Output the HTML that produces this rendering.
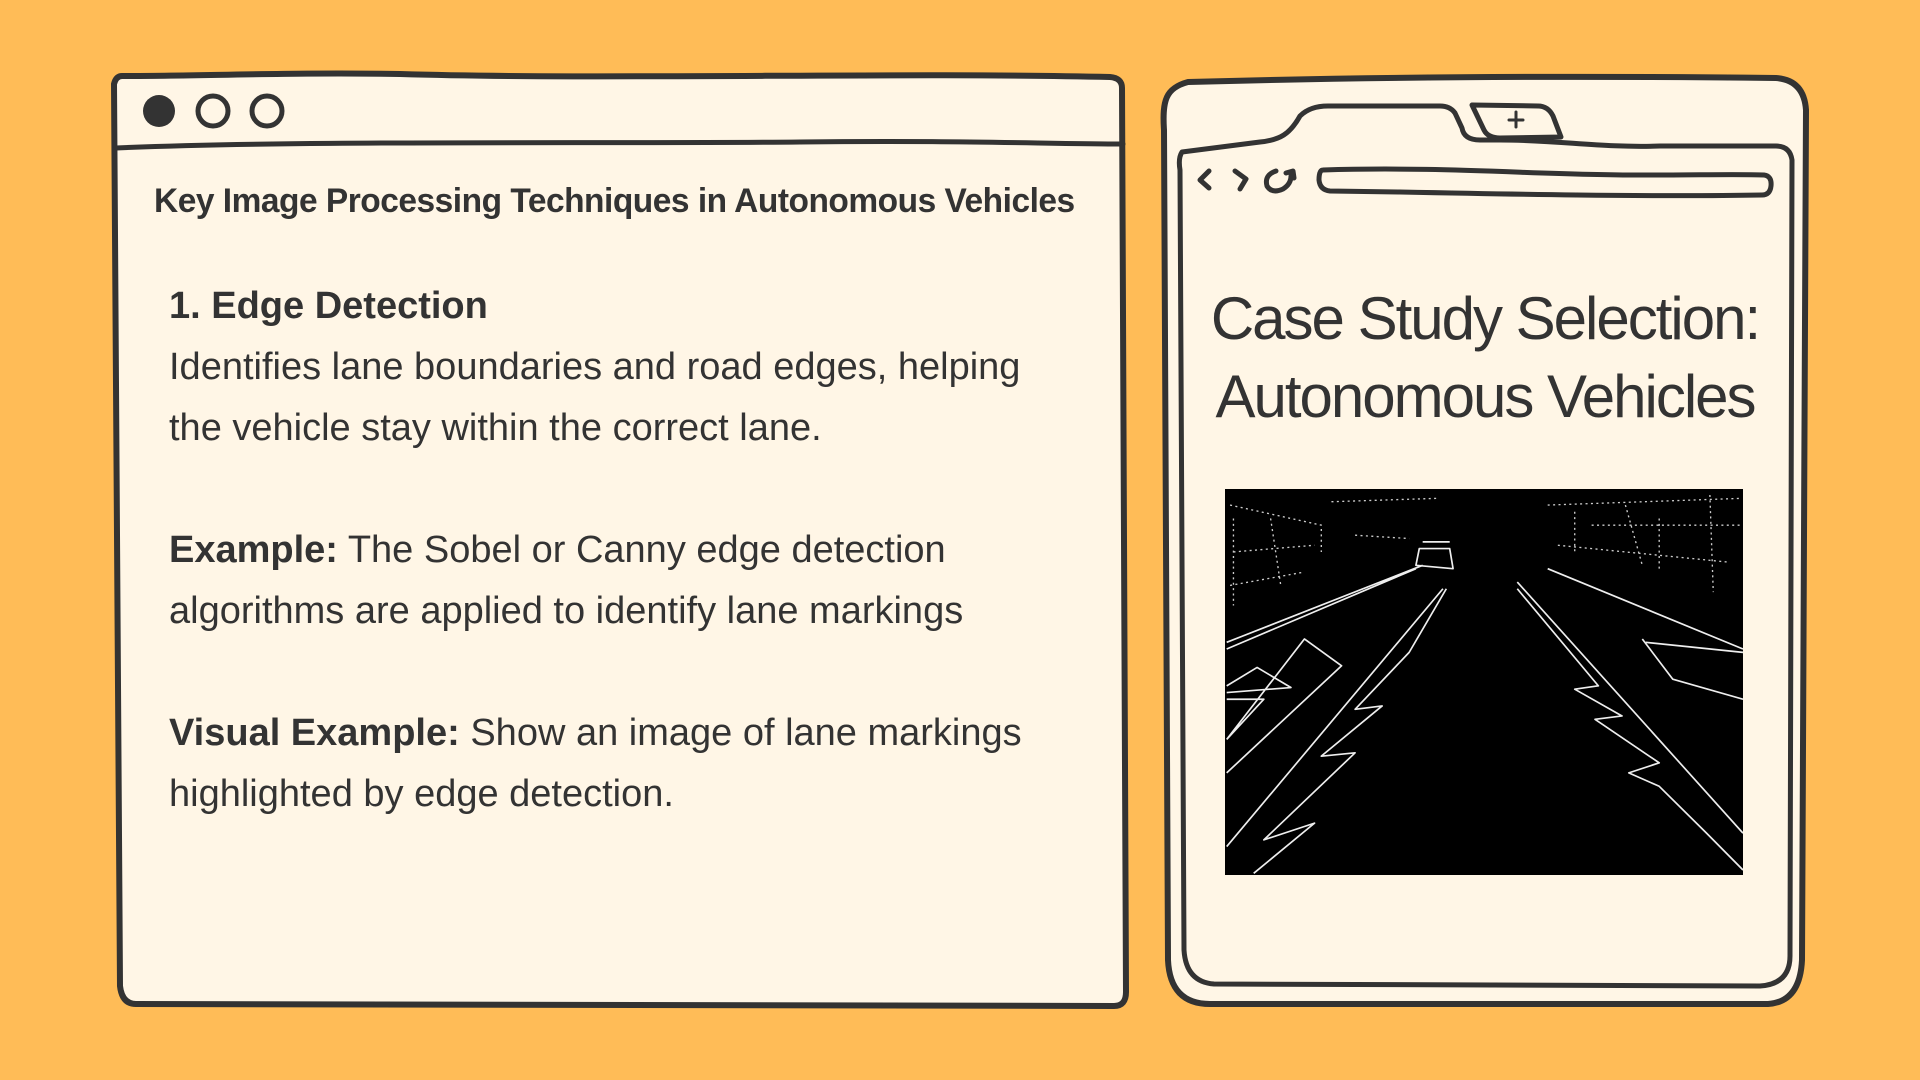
<!DOCTYPE html>
<html><head><meta charset="utf-8"><style>
html,body{margin:0;padding:0}
body{width:1920px;height:1080px;background:#FFBC57;position:relative;overflow:hidden;font-family:"Liberation Sans",sans-serif;color:#333}
svg.frame{position:absolute;left:0;top:0}
.t{position:absolute;white-space:nowrap}
</style></head><body>
<svg class="frame" width="1920" height="1080" viewBox="0 0 1920 1080">
 <g fill="#FFF6E6" stroke="#333" stroke-width="6" stroke-linejoin="round" stroke-linecap="round">
  <path d="M122,76 Q116,76 114,84 L120,986 Q122,1004 136,1004 L1114,1006 Q1126,1006 1126,992 L1122,88 Q1122,78 1110,77 C900,72 600,80 400,74 C300,72 200,76 122,76 Z"/>
  <path d="M1188,82 C1166,88 1162,100 1164,130 L1168,960 Q1170,1004 1210,1004 L1768,1004 Q1800,1002 1802,960 L1806,110 Q1804,80 1776,78 C1600,76 1400,76 1188,82 Z"/>
 </g>
 <g fill="none" stroke="#333" stroke-width="5" stroke-linecap="round" stroke-linejoin="round">
  <path d="M116,148 C300,140 600,144 800,142 C950,140 1050,144 1123,144"/>
  <path d="M1182,152 Q1178,158 1180,170 L1184,950 Q1186,982 1214,984 L1760,986 Q1790,984 1790,956 L1792,160 Q1790,146 1776,146 L1660,146 C1600,148 1560,140 1500,140 L1480,140 Q1464,140 1462,128 L1455,113 Q1450,106 1440,106 L1328,106 Q1310,106 1300,116 C1290,134 1280,140 1260,142 Z"/>
  <path d="M1472,105 L1484,130 Q1488,138 1500,138 L1561,137 L1553,116 Q1548,106 1538,106 Z"/>
  <path d="M1516,112 L1516,127 M1509,120 L1523,120" stroke-width="3"/>
  <path d="M1323,170 C1450,166 1550,176 1650,175 C1700,175 1740,174 1764,175 Q1772,176 1771,186 Q1770,195 1762,195 C1650,197 1500,194 1400,192 L1330,191 Q1320,190 1319,180 Q1319,170 1323,170 Z"/>
  <path d="M1209,171 L1200,180 L1209,188"/>
  <path d="M1235,171 L1246,179 L1240,189"/>
  <path d="M1276,171 Q1264,175 1267,186 Q1272,194 1283,189 Q1291,184 1291,176 M1286,173 L1293,171 L1294,178"/>
 </g>
 <circle cx="159" cy="111" r="16" fill="#333"/>
 <circle cx="213" cy="111" r="15" fill="none" stroke="#333" stroke-width="5"/>
 <circle cx="267" cy="111" r="15" fill="none" stroke="#333" stroke-width="5"/>
 <svg x="1225" y="489" width="518" height="386" viewBox="15 12 1533 1153" preserveAspectRatio="none">
  <rect x="15" y="12" width="1533" height="1153" fill="#000"/>
  <g fill="none" stroke="#eee" stroke-width="5" stroke-linejoin="round">
   <path d="M20,490 L580,250 M20,470 L600,240 M970,250 L1548,490"/>
   <path d="M20,600 L110,545 L210,605 L20,620 M20,760 L250,460 L360,540 L20,860 M20,640 L130,640 L20,760"/>
   <path d="M20,1080 L660,310 M100,1160 L280,1010 L130,1060 L400,800 L300,810 L480,660 L400,670 L560,500 L670,310"/>
   <path d="M880,290 L1548,1040 M880,310 L1120,600 L1050,610 L1190,690 L1110,700 L1300,830 L1210,860 L1300,900 L1440,1040 L1548,1150"/>
   <path d="M1250,460 L1340,580 L1548,640 M1260,470 L1548,500"/>
   <path d="M580,240 L590,190 L680,190 L690,250 Z M600,170 L680,170"/>
  </g>
  <g fill="none" stroke="#ccc" stroke-width="4" stroke-dasharray="6 10">
   <path d="M30,60 L300,120 L300,200 M40,200 L280,180 M30,300 L250,260 M330,50 L640,40 M400,150 L560,160 M970,60 L1540,40 M1000,180 L1500,230 M1050,80 L1050,200 M1300,100 L1300,250 M1450,30 L1460,320 M40,100 L40,360 M150,100 L180,300 M1200,60 L1250,240 M1100,120 L1540,120"/>
  </g>
 </svg>
</svg>
<div class="t" style="left:154px;top:182px;font-size:34px;letter-spacing:-0.5px;font-weight:bold;transform:scaleX(0.985);transform-origin:0 0;">Key Image Processing Techniques in Autonomous Vehicles</div>
<div class="t" style="left:169px;top:276px;font-size:38px;line-height:61px;">
<b>1. Edge Detection</b><br>Identifies lane boundaries and road edges, helping<br>the vehicle stay within the correct lane.<br><br><b>Example:</b> The Sobel or Canny edge detection<br>algorithms are applied to identify lane markings<br><br><b>Visual Example:</b> Show an image of lane markings<br>highlighted by edge detection.</div>
<div class="t" style="left:1170px;width:630px;top:280px;font-size:60px;line-height:78px;text-align:center;letter-spacing:-2px;">Case Study Selection:<br>Autonomous Vehicles</div>
</body></html>
